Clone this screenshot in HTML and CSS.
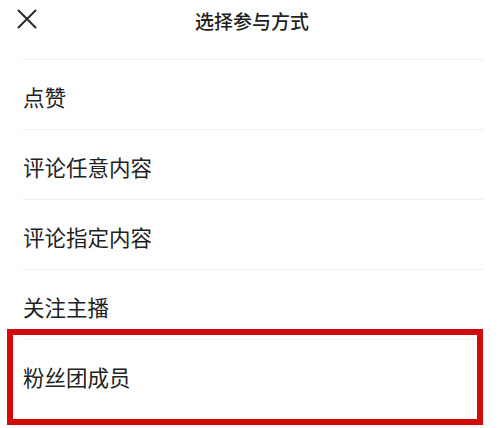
FILE: index.html
```html
<!DOCTYPE html>
<html lang="zh-CN">
<head>
<meta charset="utf-8">
<title>选择参与方式</title>
<link rel="stylesheet" href="styles.css">
</head>
<body>
<div class="sheet">
  <header class="header">
    <span class="close" aria-label="关闭">
      <svg width="20" height="20" viewBox="0 0 20 20"><path d="M1.5 1.5 L18.5 18.5 M18.5 1.5 L1.5 18.5" stroke="#2a2a2a" stroke-width="2" stroke-linecap="round" fill="none"/></svg>
    </span>
    <h1 class="title">选择参与方式</h1>
  </header>
  <ul class="options">
    <li class="option">点赞</li>
    <li class="option">评论任意内容</li>
    <li class="option">评论指定内容</li>
    <li class="option">关注主播</li>
    <li class="option option--marked">粉丝团成员</li>
  </ul>
</div>
</body>
</html>
```
FILE: styles.css
```css
html, body {
  margin: 0;
  padding: 0;
  background: #ffffff;
}
body {
  width: 500px;
  height: 428px;
  overflow: hidden;
  font-family: "Noto Sans CJK SC", "Noto Sans", sans-serif;
  color: #222222;
}
.sheet {
  display: flex;
  flex-direction: column;
}
.header {
  position: relative;
  height: 41px;
  margin-bottom: 18px;
  display: flex;
  align-items: center;
  justify-content: center;
}
.close {
  position: absolute;
  left: 17px;
  top: 9px;
  width: 20px;
  height: 20px;
  display: flex;
}
.title {
  margin: 0 0 0 4px;
  font-size: 19px;
  font-weight: 500;
  line-height: 1;
  color: #1f1f1f;
}
.options {
  list-style: none;
  margin: 0 17px 0 23px;
  padding: 0;
}
.option {
  position: relative;
  box-sizing: border-box;
  height: 70px;
  border-top: 1px solid #efefef;
  display: flex;
  align-items: center;
  padding-top: 4px;
  font-size: 21.5px;
  line-height: 1;
  color: #222222;
}
.option--marked::after {
  content: "";
  position: absolute;
  left: -16px;
  right: 0;
  top: -11px;
  bottom: -16px;
  border: 6px solid #d40a0a;
}
```
